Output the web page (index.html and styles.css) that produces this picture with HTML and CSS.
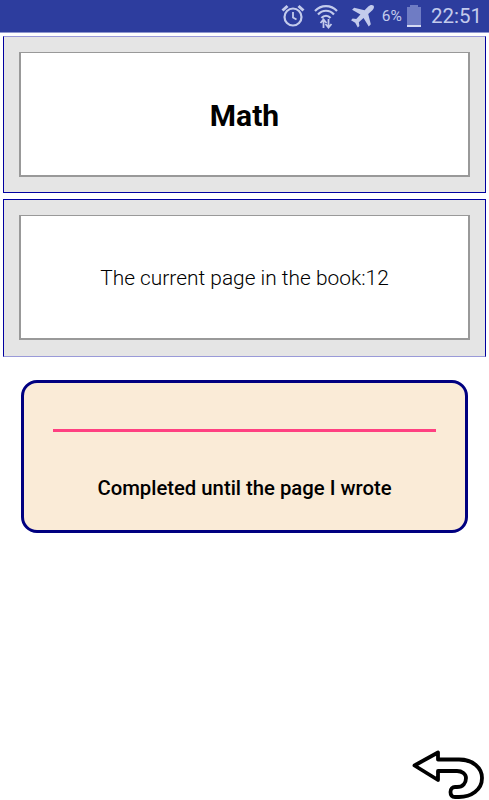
FILE: index.html
```html
<!DOCTYPE html>
<html lang="en">
<head>
    <meta charset="UTF-8">
    <meta name="viewport" content="width=device-width, initial-scale=1.0">
    <title>Book progress</title>
    <link rel="stylesheet" href="styles.css">
</head>
<body>
    <div class="status-bar">
        <!-- alarm -->
        <svg class="icon-alarm" width="24" height="24" viewBox="0 0 24 24" fill="none" stroke="#c3cbec" stroke-width="2.200">
            <circle cx="12" cy="13" r="8.500"/>
            <path d="M12 8V13.500L15.500 15.500" stroke-width="1.800"/>
            <path d="M1.500 6.500L6.500 2M22.500 6.500L17.500 2" stroke-width="3"/>
        </svg>
        <!-- wifi -->
        <svg class="icon-wifi" width="24" height="26" viewBox="0 0 24 26" fill="none" stroke="#c3cbec" stroke-width="2.200">
            <path d="M1 8C7 1.500 17 1.500 23 8"/>
            <path d="M4 11.500C8.500 6.500 15.500 6.500 20 11.500"/>
            <path d="M7.500 15C10 12 14 12 16.500 15"/>
            <path d="M9.500 25V17M6.500 20L9.500 16.500L12.500 20M14.500 16V24M11.500 21L14.500 24.500L17.500 21" stroke-width="1.800"/>
        </svg>
        <!-- plane -->
        <svg class="icon-plane" width="25" height="25" viewBox="0 0 24 24" fill="#c3cbec">
            <path d="M22.500 1.500C21 0.500 19 1 17.500 2.500L14 6L4 3.500L2 5.500L10 10L6 14.500L2.500 14L1 15.500L5 18L7.500 22.500L9 21L8.500 17.500L13 13.500L18 21.500L20 19.500L17.500 9.500L21.500 6C23 4.500 23.500 2.500 22.500 1.500Z"/>
        </svg>
        <span class="battery-pct">6%</span>
        <div class="battery"><div class="battery-level"></div></div>
        <span class="clock">22:51</span>
    </div>

    <div class="panel panel-top">
        <div class="panel-inner title">Math</div>
    </div>
    <div class="panel panel-bottom">
        <div class="panel-inner page-info">The current page in the book:12</div>
    </div>

    <div class="complete-btn">
        <div class="page-input"></div>
        <div class="complete-label">Completed until the page I wrote</div>
    </div>

    <!-- back arrow -->
    <svg class="back-arrow" width="74" height="50" viewBox="0 0 74 50" fill="#fff" stroke="#000" stroke-width="3.800" stroke-linejoin="round">
        <path d="M2.500 16.500L26 3.500V10.500H47C61 10.500 70 19 70 29C70 41 59 48 47 48H43C40 48 38.500 46 38.500 43C38.500 40 40.500 38 43 38H45C51 38 54 34 54 29C54 25 50 22 45 22H26V31Z"/>
    </svg>
</body>
</html>
```

FILE: styles.css
```css
* {
    margin: 0;
    padding: 0;
    box-sizing: border-box;
}

body {
    width: 489px;
    height: 800px;
    position: relative;
    overflow: hidden;
    background: #fff;
    font-family: 'Roboto', sans-serif;
    color: #000;
}

/* barra de estado */
.status-bar {
    height: 32px;
    margin-bottom: 4px;
    background: #2d3d9e;
    display: flex;
    align-items: center;
    justify-content: flex-end;
    padding-right: 7px;
    color: #c3cbec;
    box-shadow: 0 1px 0 #8f97cf;
}

.icon-alarm {
    margin-right: 9px;
}

.icon-wifi {
    margin-right: 12px;
}

.icon-plane {
    margin-right: 7px;
}

.battery-pct {
    font-size: 15.500px;
    margin-right: 5px;
}

.battery {
    width: 14px;
    height: 20px;
    background: #6f7cc4;
    position: relative;
    margin-right: 10px;
    margin-top: 2px;
}

.battery::before {
    content: "";
    position: absolute;
    top: -2px;
    left: 3px;
    width: 8px;
    height: 2px;
    background: #6f7cc4;
}

.battery-level {
    position: absolute;
    left: 0;
    right: 0;
    bottom: 0;
    height: 2px;
    background: #d5daf2;
}

.clock {
    font-size: 20.500px;
}

/* paneles */
.panel {
    width: 483px;
    height: 157px;
    margin: 0 0 6px 3px;
    padding: 15px;
    background: #e5e5e5;
    border: 1px solid #0000a0;
}

.panel-top {
    border-top-color: #9a9ad8;
}

.panel-bottom {
    height: 158px;
    border-bottom-color: #9a9ad8;
}

.panel-inner {
    height: 125px;
    background: #fff;
    border: 1px solid #999;
    border-width: 1px 2px 2px 2px;
    display: flex;
    align-items: center;
    justify-content: center;
}

.title {
    padding-top: 2px;
    font-size: 30px;
    font-weight: 700;
}

.page-info {
    padding-top: 2px;
    font-size: 20.900px;
    font-weight: 300;
}

/* boton */
.complete-btn {
    width: 447px;
    height: 153px;
    margin: 23px 0 0 21px;
    padding: 46px 29px 0;
    background: #faebd7;
    border: 3px solid #000080;
    border-radius: 16px;
}

.page-input {
    height: 3px;
    background: #ff4081;
}

.complete-label {
    margin-top: 44px;
    text-align: center;
    font-size: 20.300px;
    font-weight: 500;
}

.back-arrow {
    position: absolute;
    left: 412px;
    top: 749px;
}
```
